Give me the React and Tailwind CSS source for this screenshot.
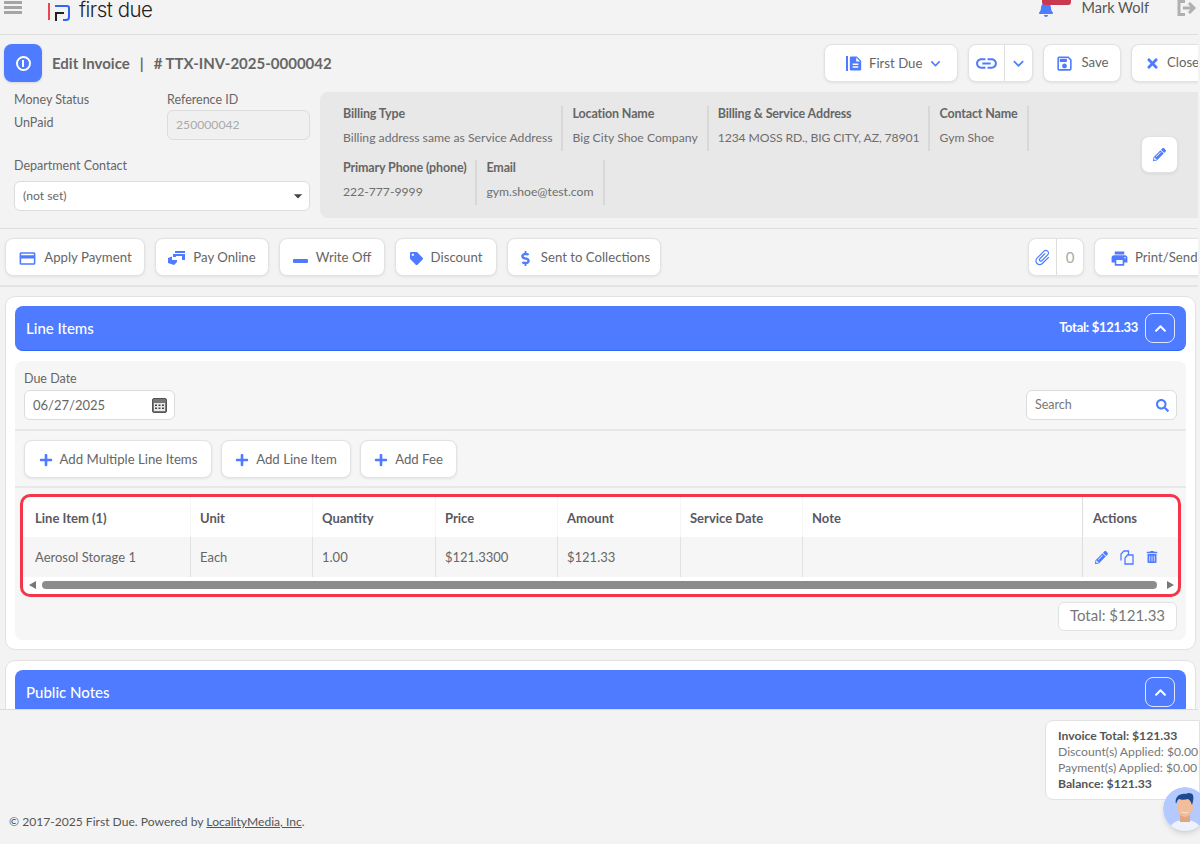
import React from "react";
import { FaBell, FaDollarSign, FaTag, FaPencilAlt, FaTrashAlt, FaPlus, FaSearch, FaTimes, FaChevronUp } from "react-icons/fa";
import { MdOutlineCreditCard, MdOutlineSave, MdLink, MdKeyboardArrowDown, MdAttachFile, MdDescription, MdArrowDropDown, MdPrint } from "react-icons/md";

const blue = "text-[#4e7bff]";

const billing = [
  [
    { label: "Billing Type", value: "Billing address same as Service Address" },
    { label: "Location Name", value: "Big City Shoe Company" },
    { label: "Billing & Service Address", value: "1234 MOSS RD., BIG CITY, AZ, 78901", tight: true },
    { label: "Contact Name", value: "Gym Shoe" },
  ],
  [
    { label: "Primary Phone (phone)", value: "222-777-9999" },
    { label: "Email", value: "gym.shoe@test.com" },
  ],
];

const columns = [
  { title: "Line Item (1)", value: "Aerosol Storage 1", width: "w-[167px]" },
  { title: "Unit", value: "Each", width: "w-[122px]" },
  { title: "Quantity", value: "1.00", width: "w-[123px]" },
  { title: "Price", value: "$121.3300", width: "w-[122px]" },
  { title: "Amount", value: "$121.33", width: "w-[123px]" },
  { title: "Service Date", value: "", width: "w-[122px]" },
  { title: "Note", value: "", width: "w-[280px]" },
];

function Btn({ children, className = "" }) {
  return (
    <div className={`flex items-center justify-center bg-white border border-[#e2e2e2] rounded-lg shadow-[0_1px_3px_rgba(0,0,0,0.08)] text-[13.2px] text-[#666] whitespace-nowrap shrink-0 ${className}`}>
      {children}
    </div>
  );
}

function Logo() {
  return (
    <div className="flex items-start">
      <svg width="24" height="20" viewBox="0 0 24 20" className="ml-[1px]" fill="none">
        <rect x="0" y="1" width="2" height="17" fill="#f0434f" />
        <path d="M7 4h12a2 2 0 0 1 2 2v9a3 3 0 0 1-3 3h-3" stroke="#2f66f5" strokeWidth="2" />
        <path d="M8 19v-8h8" stroke="#222" strokeWidth="2" />
      </svg>
      <span className="ml-[7px] -mt-[7px] text-[20.5px] leading-[30px] font-light text-[#222] font-['Inter',sans-serif] tracking-[-0.5px]">first due</span>
    </div>
  );
}

function TopBar() {
  return (
    <div className="h-[35px] shrink-0 border-b border-[#dedede] flex justify-between overflow-hidden">
      <div className="flex items-start">
        <div className="ml-[4px] mt-[1px] w-[18px] flex flex-col gap-[2px]">
          <span className="h-[3px] bg-[#a5a5a5]" />
          <span className="h-[3px] bg-[#a5a5a5]" />
          <span className="h-[3px] bg-[#a5a5a5]" />
        </div>
        <div className="ml-[25px] mt-[2px]"><Logo /></div>
      </div>
      <div className="flex items-start">
        <div className="relative w-[34px] h-[18px]">
          <FaBell className={`${blue} absolute left-[1px] top-[1px] text-[16px]`} />
          <div className="absolute left-[5px] top-0 w-[29px] h-[5px] bg-[#c8394f] rounded-b-[3px]" />
        </div>
        <span className="ml-[10px] -mt-[1px] text-[14.5px] leading-[18px] text-[#555]">Mark Wolf</span>
        <svg width="20" height="17" viewBox="0 0 20 17" className="ml-[28px] mr-[1px]" fill="none" stroke="#b0b0b0" strokeWidth="3">
          <path d="M8 1.5H2v13h6" />
          <path d="M6 8h10M12 3l5 5-5 5" />
        </svg>
      </div>
    </div>
  );
}

function TitleRow() {
  return (
    <div className="flex items-center justify-between pl-[4px] pt-[9px] h-[47px] shrink-0">
      <div className="flex items-center">
        <div className="w-[38px] h-[38px] rounded-lg bg-[#4e7bff] flex items-center justify-center shadow-sm">
          <div className="w-[15px] h-[15px] rounded-full border-[2.5px] border-white flex items-center justify-center">
            <span className="w-[2px] h-[7px] bg-white" />
          </div>
        </div>
        <span className="ml-[10px] text-[15px] font-bold text-[#666]">Edit Invoice</span>
        <span className="ml-[10px] text-[15px] font-bold text-[#666]">|</span>
        <span className="ml-[10px] text-[15px] font-bold text-[#666]"># TTX-INV-2025-0000042</span>
      </div>
      <div className="flex items-center gap-[10px] -mr-[9px]">
        <Btn className="w-[134px] h-[38px] justify-start pl-[21px]">
          <span className="w-[2px] h-[15px] bg-[#4e7bff]" />
          <MdDescription className={`${blue} text-[17px] -ml-[1px]`} />
          <span className="ml-[5px] mt-[2px]">First Due</span>
          <MdKeyboardArrowDown className={`${blue} text-[19px] ml-[4px]`} />
        </Btn>
        <Btn className="w-[65px] h-[38px]">
          <span className="flex-1 flex justify-center border-r border-[#ddd] h-full items-center">
            <MdLink className={`${blue} text-[25px]`} />
          </span>
          <span className="w-[27px] flex justify-center">
            <MdKeyboardArrowDown className={`${blue} text-[21px]`} />
          </span>
        </Btn>
        <Btn className="w-[78px] h-[38px] gap-[7px]">
          <MdOutlineSave className={`${blue} text-[19px]`} />
          Save
        </Btn>
        <Btn className="w-[76px] h-[38px] gap-[7px] justify-start pl-[13px]">
          <FaTimes className={`${blue} text-[15px]`} />
          Close
        </Btn>
      </div>
    </div>
  );
}

function BillingPanel() {
  return (
    <div className="flex-1 h-[126px] bg-[#e8e8e8] rounded-l-lg pl-[23px] pt-[14px] relative">
      {billing.map((row, i) => (
        <div key={i} className={`flex ${i === 1 ? "mt-[9px]" : ""}`}>
          {row.map((c, j) => (
            <div key={c.label} className={`h-[45px] pr-[9px] border-r-2 border-[#d8d8d8] ${j > 0 ? "pl-[9px]" : ""}`}>
              <div className="text-[12.5px] tracking-[-0.15px] font-bold text-[#666] leading-[15px]">{c.label}</div>
              <div className={`text-[12.2px] text-[#6e6e6e] leading-[15px] mt-[9px] ${c.tight ? "tracking-[-0.1px]" : ""}`}>{c.value}</div>
            </div>
          ))}
        </div>
      ))}
      <Btn className="absolute right-[20px] top-[44px] w-[37px] h-[37px]">
        <FaPencilAlt className={`${blue} text-[13px]`} />
      </Btn>
    </div>
  );
}

function InfoRow() {
  return (
    <div className="flex pt-[10px] pb-[10px] h-[147px] shrink-0 border-b border-[#dedede]">
      <div className="w-[320px] pl-[14px] pr-[10px] text-[12.5px] text-[#666]">
        <div className="flex">
          <div className="w-[153px]">
            <div className="leading-[15px]">Money Status</div>
            <div className="mt-[8px] leading-[15px]">UnPaid</div>
          </div>
          <div className="flex-1">
            <div className="leading-[15px]">Reference ID</div>
            <div className="mt-[3px] h-[30px] border border-[#dcdcdc] bg-[#f0f0f0] rounded-md flex items-center px-[8px] text-[12.2px] text-[#aaa]">250000042</div>
          </div>
        </div>
        <div className="mt-[18px] leading-[15px]">Department Contact</div>
        <div className="mt-[8px] h-[30px] bg-white border border-[#dcdcdc] rounded-md flex items-center justify-between pl-[8px] pr-[1px] text-[12.2px]">
          (not set)
          <MdArrowDropDown className="text-[#444] text-[20px]" />
        </div>
      </div>
      <BillingPanel />
    </div>
  );
}

function PayOnlineIcon() {
  return (
    <svg width="18" height="14" viewBox="0 0 18 14" fill="#4e7bff">
      <path d="M7 0h10v2H7zM5 3h12v6h-3V5H8v1H5zM0 7l4-1.5V9h5v2l-3 3-6-2z" />
    </svg>
  );
}

function ActionRow() {
  return (
    <div className="flex justify-between pl-[5px] py-[9px] h-[58px] shrink-0 border-b-2 border-[#e5e5e5]">
      <div className="flex gap-[10px]">
        <Btn className="w-[140px] h-[38px] gap-[7px] pt-[2px]"><MdOutlineCreditCard className={`${blue} text-[19px]`} />Apply Payment</Btn>
        <Btn className="w-[114px] h-[38px] gap-[7px] pt-[2px]"><PayOnlineIcon />Pay Online</Btn>
        <Btn className="w-[106px] h-[38px] gap-[8px] pt-[2px]"><span className="w-[15px] h-[4px] bg-[#4e7bff] rounded-[1px] mt-[6px]" />Write Off</Btn>
        <Btn className="w-[102px] h-[38px] gap-[8px] pt-[2px]"><FaTag className={`${blue} text-[13px]`} />Discount</Btn>
        <Btn className="w-[154px] h-[38px] gap-[8px] pt-[2px]"><FaDollarSign className={`${blue} text-[15px]`} />Sent to Collections</Btn>
      </div>
      <div className="flex gap-[10px] -mr-[8px]">
        <Btn className="w-[56px] h-[38px]">
          <span className="w-[28px] h-full flex items-center justify-center border-r border-[#ddd]">
            <MdAttachFile className={`${blue} text-[19px] rotate-45`} />
          </span>
          <span className="flex-1 text-center text-[15px] text-[#aaa]">0</span>
        </Btn>
        <Btn className="w-[112px] h-[38px] gap-[6px] justify-start pl-[15px] pt-[2px]"><MdPrint className={`${blue} text-[19px]`} />Print/Send</Btn>
      </div>
    </div>
  );
}

function SectionHeader({ title, total, className = "" }) {
  return (
    <div className={`bg-[#4e7bff] border-b border-[#2f66f5] rounded-lg flex items-center justify-between pl-[11px] pr-[11px] ${className}`}>
      <span className="text-[15px] font-medium text-white">{title}</span>
      <div className="flex items-center gap-[7px]">
        {total && <span className="text-[13px] tracking-[-0.3px] font-bold text-white">{total}</span>}
        <div className="w-[30px] h-[30px] border-[1.5px] border-[#dfe7ff] rounded-lg flex items-center justify-center">
          <FaChevronUp className="text-white text-[13px]" />
        </div>
      </div>
    </div>
  );
}

function LineItemsTable() {
  return (
    <div className="mx-[5px] mt-[6px] h-[103px] border-[3px] border-[#f5364a] rounded-[10px] bg-white overflow-hidden">
      <div className="flex h-[40px] text-[13px] font-bold text-[#5a5862]">
        {columns.map((c, i) => (
          <div key={c.title} className={`${c.width} flex items-center pt-[3px] ${i === 0 ? "pl-[12px]" : "pl-[9px] border-l border-[#f6f6f6]"}`}>{c.title}</div>
        ))}
        <div className="flex-1 flex items-center pt-[3px] pl-[10px] border-l border-[#dedede]">Actions</div>
      </div>
      <div className="flex h-[40px] bg-[#f6f6f6] text-[13px] text-[#666]">
        {columns.map((c, i) => (
          <div key={c.title} className={`${c.width} flex items-center pt-[2px] ${i === 0 ? "pl-[12px]" : "pl-[9px] border-l border-[#e2e2e2]"}`}>{c.value}</div>
        ))}
        <div className="flex-1 flex items-center gap-[12px] pl-[12px] border-l border-[#dedede]">
          <FaPencilAlt className={`${blue} text-[13px]`} />
          <svg width="14" height="15" viewBox="0 0 14 15" fill="none" stroke="#4e7bff" strokeWidth="1.3">
            <path d="M1 10.5V4l3-3h4.5v3.5M5 14V8l2.5-3H13v9z" />
          </svg>
          <FaTrashAlt className={`${blue} text-[12px]`} />
        </div>
      </div>
      <div className="flex items-center h-[16px] pl-[6px] pr-[4px]">
        <span className="w-0 h-0 border-y-[4px] border-y-transparent border-r-[7px] border-r-[#777]" />
        <div className="flex-1 ml-[6px] mr-[10px] h-[8px] rounded-full bg-[#8c8c8c]" />
        <span className="w-0 h-0 border-y-[4px] border-y-transparent border-l-[7px] border-l-[#777]" />
      </div>
    </div>
  );
}

function LineItemsCard() {
  return (
    <div className="ml-[5px] mr-[2px] mt-[9px] h-[354px] shrink-0 bg-white border border-[#e2e2e2] rounded-[10px] px-[9px] pt-[9px]">
      <SectionHeader title="Line Items" total="Total: $121.33" className="h-[45px]" />
      <div className="mt-[10px] h-[279px] bg-[#f6f6f6] rounded-lg">
        <div className="h-[70px] border-b-2 border-[#e8e8e8] px-[9px] flex justify-between items-end pb-[9px]">
          <div>
            <div className="text-[12.5px] text-[#666] leading-[15px] mb-[4px]">Due Date</div>
            <div className="w-[151px] h-[30px] bg-white border border-[#dcdcdc] rounded-md flex items-center justify-between pl-[8px] pr-[7px] pt-[1px] text-[13px] text-[#666]">
              06/27/2025
              <svg width="15" height="15" viewBox="0 0 15 15">
                <rect x="0.5" y="0.5" width="14" height="14" rx="1.5" fill="#777" stroke="#555" />
                <rect x="2" y="5" width="11" height="8" fill="#e8e8e8" />
                <path d="M3 6.5h2v1.5H3zM6.5 6.5h2v1.5h-2zM10 6.5h2v1.5h-2zM3 9.5h2V11H3zM6.5 9.5h2V11h-2zM10 9.5h2V11h-2z" fill="#444" />
              </svg>
            </div>
          </div>
          <div className="w-[151px] h-[30px] bg-white border border-[#dcdcdc] rounded-md flex items-center justify-between pl-[8px] pr-[7px] pt-[1px] text-[12.5px] text-[#777]">
            Search
            <FaSearch className={`${blue} text-[13px]`} />
          </div>
        </div>
        <div className="h-[57px] border-b-2 border-[#e8e8e8] px-[9px] pt-[9px] flex gap-[9px]">
          <Btn className="w-[188px] h-[38px] gap-[7px] pt-[2px]"><FaPlus className={`${blue} text-[14px]`} />Add Multiple Line Items</Btn>
          <Btn className="w-[130px] h-[38px] gap-[7px] pt-[2px]"><FaPlus className={`${blue} text-[14px]`} />Add Line Item</Btn>
          <Btn className="w-[97px] h-[38px] gap-[7px] pt-[2px]"><FaPlus className={`${blue} text-[14px]`} />Add Fee</Btn>
        </div>
        <LineItemsTable />
        <div className="flex justify-end mt-[5px] mr-[9px]">
          <div className="w-[119px] h-[29px] bg-white border border-[#e2e2e2] rounded-md flex items-center justify-center pb-[2px] text-[15px] text-[#777]">Total: $121.33</div>
        </div>
      </div>
    </div>
  );
}

function Avatar() {
  return (
    <svg width="44" height="44" viewBox="0 0 44 44" className="absolute left-[1163px] top-[787px] rounded-full shadow-md">
      <circle cx="22" cy="22" r="22" fill="#b4c9ff" />
      <path d="M6 44c1-8 8-11 16-11s15 3 16 11z" fill="#eef2fa" />
      <rect x="17" y="26" width="10" height="9" fill="#e0a583" />
      <ellipse cx="22" cy="20" rx="8" ry="10" fill="#f1bd9b" />
      <path d="M13 17c-2-7 4-11 10-10 2-2 6-1 7 1 1 3 0 7-1 10-1-3-2-5-4-6-3 1-7 1-9 0-2 1-2 3-3 5z" fill="#1f4a8f" />
      <path d="M18 24c2 2 6 2 8 0-1 3-7 3-8 0z" fill="#fff" />
    </svg>
  );
}

export default function App() {
  return (
    <div className="relative h-[844px] w-[1200px] overflow-hidden bg-[#f3f3f3] font-['Lato',sans-serif] pr-[2px]">
      <TopBar />
      <div className="h-[675px] overflow-hidden flex flex-col border-b border-[#dcdcdc]">
        <TitleRow />
        <InfoRow />
        <ActionRow />
        <LineItemsCard />
        <div className="ml-[5px] mr-[2px] mt-[10px] h-[60px] shrink-0 bg-white border border-[#e2e2e2] rounded-[10px] px-[9px] pt-[9px]">
          <SectionHeader title="Public Notes" className="h-[45px]" />
        </div>
      </div>
      <div className="flex justify-end pt-[10px]">
        <div className="w-[155px] -mr-[2px] h-[80px] bg-white border border-[#e2e2e2] rounded-l-lg pl-[12px] pt-[7px] text-[12.2px] leading-[16px] text-[#777] whitespace-nowrap overflow-hidden">
          <div className="font-bold text-[#555]">Invoice Total: $121.33</div>
          <div>Discount(s) Applied: $0.00</div>
          <div>Payment(s) Applied: $0.00</div>
          <div className="font-bold text-[#555]">Balance: $121.33</div>
        </div>
      </div>
      <div className="pl-[9px] mt-[13px] text-[12.1px] text-[#555]">
        © 2017-2025 First Due. Powered by <span className="underline">LocalityMedia, Inc</span>.
      </div>
      <Avatar />
    </div>
  );
}
